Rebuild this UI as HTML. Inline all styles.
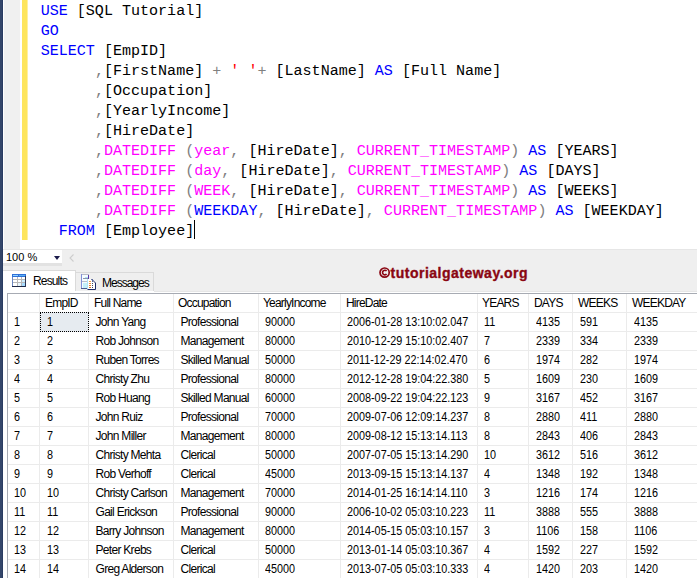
<!DOCTYPE html>
<html><head><meta charset="utf-8">
<style>
html,body{margin:0;padding:0;}
body{width:697px;height:578px;overflow:hidden;position:relative;background:#fff;}
.a{position:absolute;}
#code{position:absolute;left:40.7px;top:1px;font-family:"Liberation Mono",monospace;font-size:15.05px;line-height:20px;white-space:pre;color:#000;}
.k{color:#0000ff}.f{color:#ff00ff}.g{color:#808080}.s{color:#ff0000}
.t{position:absolute;font-family:"Liberation Sans",sans-serif;font-size:12px;line-height:19px;white-space:pre;color:#000;}
.al{letter-spacing:-0.7px}.ah{letter-spacing:-0.8px}.n{display:inline-block;transform:scaleX(0.9);transform-origin:0 0}
.h{}
.vl{position:absolute;width:1px;background:#ebebeb;}
.hl{position:absolute;height:1px;background:#ebebeb;}
</style></head><body>
<div class="a" style="left:0;top:0;width:2px;height:578px;background:#34466a"></div>
<div class="a" style="left:2px;top:0;width:1px;height:578px;background:#2a3c62"></div>
<div class="a" style="left:4px;top:0;width:16px;height:249px;background:#f0f0f0"></div>
<div class="a" style="left:22px;top:0;width:5px;height:240px;background:#fee55c"></div><div class="a" style="left:27px;top:0;width:1px;height:240px;background:#fef0a0"></div>
<div id="code"><span class="k">USE</span> [SQL Tutorial]
<span class="k">GO</span>
<span class="k">SELECT</span> [EmpID]
      <span class="g">,</span>[FirstName] <span class="g">+</span> <span class="s">' '</span><span class="g">+</span> [LastName] <span class="k">AS</span> [Full Name]
      <span class="g">,</span>[Occupation]
      <span class="g">,</span>[YearlyIncome]
      <span class="g">,</span>[HireDate]
      <span class="g">,</span><span class="f">DATEDIFF</span> <span class="g">(</span><span class="f">year</span><span class="g">,</span> [HireDate]<span class="g">,</span> <span class="f">CURRENT_TIMESTAMP</span><span class="g">)</span> <span class="k">AS</span> [YEARS]
      <span class="g">,</span><span class="f">DATEDIFF</span> <span class="g">(</span><span class="f">day</span><span class="g">,</span> [HireDate]<span class="g">,</span> <span class="f">CURRENT_TIMESTAMP</span><span class="g">)</span> <span class="k">AS</span> [DAYS]
      <span class="g">,</span><span class="f">DATEDIFF</span> <span class="g">(</span><span class="f">WEEK</span><span class="g">,</span> [HireDate]<span class="g">,</span> <span class="f">CURRENT_TIMESTAMP</span><span class="g">)</span> <span class="k">AS</span> [WEEKS]
      <span class="g">,</span><span class="f">DATEDIFF</span> <span class="g">(</span><span class="k">WEEKDAY</span><span class="g">,</span> [HireDate]<span class="g">,</span> <span class="f">CURRENT_TIMESTAMP</span><span class="g">)</span> <span class="k">AS</span> [WEEKDAY]
  <span class="k">FROM</span> [Employee]</div>
<div class="a" style="left:194px;top:220px;width:1px;height:19px;background:#000"></div>
<div class="a" style="left:3px;top:249px;width:694px;height:42px;background:#efefef"></div>
<div class="a" style="left:3px;top:249px;width:694px;height:1px;background:#e6e6e6"></div>
<div class="a" style="left:3px;top:250px;width:59px;height:13px;background:#fff"></div>
<div class="a" style="left:3px;top:263px;width:59px;height:3px;background:#e2e2e2"></div>
<div class="t" style="left:6px;top:248px;font-size:11px;letter-spacing:0px">100 %</div>
<svg class="a" style="left:54px;top:256px" width="6" height="4"><path d="M0 0H6L3 4Z" fill="#1b1b4a"/></svg>
<svg class="a" style="left:68px;top:253px" width="8" height="10"><path d="M5.5 1.5L2 5L5.5 8.5" stroke="#cdcdcd" stroke-width="1.1" fill="none"/></svg>
<div class="a" style="left:3px;top:270px;width:73px;height:21px;background:#fff;box-sizing:border-box;border-top:1px solid #dadada;border-right:1px solid #dadada"></div>
<div class="a" style="left:76px;top:272px;width:78px;height:19px;background:#efefef;box-sizing:border-box;border-top:1px solid #dadada;border-right:1px solid #dadada"></div>
<div class="a" style="left:154px;top:291px;width:543px;height:1px;background:#e6e6e6"></div>
<svg class="a" style="left:12px;top:274px" width="14" height="13">
<rect x="0" y="0" width="14" height="13" fill="#6a86c0"/>
<rect x="1" y="1" width="12" height="11" fill="#fff"/>
<rect x="0" y="0" width="14" height="3" fill="#2f6fd8"/>
<rect x="1" y="1" width="5" height="1" fill="#90d4ff"/>
<rect x="7" y="1" width="6" height="1" fill="#5ab0f0"/>
<rect x="5" y="3" width="1" height="9" fill="#b8b8b8"/>
<rect x="9" y="3" width="1" height="9" fill="#b8b8b8"/>
<rect x="1" y="5" width="12" height="1" fill="#b8b8b8"/>
<rect x="1" y="8" width="12" height="1" fill="#b8b8b8"/>
<rect x="10" y="6" width="3" height="2" fill="#cdeeff"/>
<rect x="10" y="9" width="3" height="3" fill="#a8dcff"/>
<rect x="6" y="9" width="3" height="3" fill="#e8f6ff"/>
<rect x="0" y="12" width="14" height="1" fill="#1e2846"/>
<rect x="13" y="2" width="1" height="11" fill="#2a3553"/>
</svg>
<svg class="a" style="left:81px;top:274px" width="15" height="16">
<rect x="0" y="0" width="8" height="15" fill="#8090d8"/>
<rect x="1" y="1" width="6" height="13" fill="#f6fcff"/>
<rect x="1" y="0" width="7" height="1" fill="#b8bcc8"/>
<rect x="7" y="1" width="1" height="5" fill="#5a38a8"/>
<rect x="2" y="4" width="5" height="1" fill="#8c94ac"/>
<rect x="4" y="3" width="3" height="1" fill="#a8e4f4"/>
<rect x="1" y="7" width="6" height="1" fill="#b8bcc8"/>
<rect x="2" y="9" width="5" height="5" fill="#c4f0fa"/>
<rect x="0" y="14" width="7" height="1" fill="#4a5a90"/>
<path d="M6 5H11L14 8V15H6Z" fill="#ffffff"/>
<rect x="6" y="5" width="1" height="10" fill="#b0e4f4"/>
<path d="M10.5 5.5H11L14.5 9V15.5H6.5" stroke="#1e2a66" stroke-width="1" fill="none"/>
<rect x="11" y="5" width="1" height="3" fill="#5a6a9a"/>
<rect x="8" y="7" width="2" height="1" fill="#f5a040"/>
<rect x="8" y="9" width="2" height="1" fill="#f09030"/>
<rect x="8" y="11" width="2" height="1" fill="#e88028"/>
<rect x="8" y="13" width="2" height="1" fill="#e07020"/>
<rect x="11" y="9" width="1" height="1" fill="#404860"/>
<rect x="11" y="11" width="1" height="1" fill="#404860"/>
<rect x="11" y="13" width="1" height="1" fill="#404860"/>
</svg>
<div class="t" style="left:33px;top:272px;letter-spacing:-0.85px">Results</div>
<div class="t" style="left:102px;top:274px;letter-spacing:-1px">Messages</div>
<svg class="a" style="left:379px;top:267px" width="12" height="12"><circle cx="5.6" cy="5.6" r="4.6" stroke="#8a0612" stroke-width="1.7" fill="none"/><path d="M7.6 4.1A2.3 2.3 0 1 0 7.6 7.1" stroke="#8a0612" stroke-width="1.6" fill="none"/></svg>
<div class="a" style="left:390.5px;top:263px;font-family:'Liberation Sans',sans-serif;font-weight:bold;font-size:14px;line-height:20px;letter-spacing:0.5px;color:#8a0612;-webkit-text-stroke:0.35px #8a0612;white-space:pre">tutorialgateway.org</div>
<div class="a" style="left:7px;top:293px;width:690px;height:1px;background:#a7abb3"></div>
<div class="a" style="left:7px;top:293px;width:1px;height:285px;background:#a7abb3"></div>

<div class="vl" style="left:39px;top:294px;height:284px"></div>
<div class="vl" style="left:88px;top:294px;height:284px"></div>
<div class="vl" style="left:173px;top:294px;height:284px"></div>
<div class="vl" style="left:258px;top:294px;height:284px"></div>
<div class="vl" style="left:340px;top:294px;height:284px"></div>
<div class="vl" style="left:477px;top:294px;height:284px"></div>
<div class="vl" style="left:528px;top:294px;height:284px"></div>
<div class="vl" style="left:572px;top:294px;height:284px"></div>
<div class="vl" style="left:626px;top:294px;height:284px"></div>
<div class="hl" style="left:8px;top:312px;width:689px"></div>
<div class="hl" style="left:8px;top:331px;width:689px"></div>
<div class="hl" style="left:8px;top:350px;width:689px"></div>
<div class="hl" style="left:8px;top:369px;width:689px"></div>
<div class="hl" style="left:8px;top:388px;width:689px"></div>
<div class="hl" style="left:8px;top:407px;width:689px"></div>
<div class="hl" style="left:8px;top:426px;width:689px"></div>
<div class="hl" style="left:8px;top:445px;width:689px"></div>
<div class="hl" style="left:8px;top:464px;width:689px"></div>
<div class="hl" style="left:8px;top:483px;width:689px"></div>
<div class="hl" style="left:8px;top:502px;width:689px"></div>
<div class="hl" style="left:8px;top:521px;width:689px"></div>
<div class="hl" style="left:8px;top:540px;width:689px"></div>
<div class="hl" style="left:8px;top:559px;width:689px"></div>
<div class="a" style="left:40px;top:312px;width:49px;height:20px;box-sizing:border-box;border:1px dotted #000;background:#e6ebf0"></div>
<div class="t ah" style="left:45px;top:294px">EmpID</div>
<div class="t ah" style="left:94px;top:294px">Full Name</div>
<div class="t ah" style="left:178px;top:294px">Occupation</div>
<div class="t ah" style="left:263px;top:294px">YearlyIncome</div>
<div class="t ah" style="left:346px;top:294px">HireDate</div>
<div class="t ah" style="left:482px;top:294px">YEARS</div>
<div class="t ah" style="left:534px;top:294px">DAYS</div>
<div class="t ah" style="left:578px;top:294px">WEEKS</div>
<div class="t ah" style="left:632px;top:294px">WEEKDAY</div>
<div class="t" style="left:14px;top:313px"><span class="n">1</span></div>
<div class="t" style="left:47px;top:313px"><span class="n">1</span></div>
<div class="t al" style="left:95.5px;top:313px">John Yang</div>
<div class="t al" style="left:180.5px;top:313px">Professional</div>
<div class="t" style="left:265px;top:313px"><span class="n">90000</span></div>
<div class="t" style="left:347px;top:313px"><span class="n">2006-01-28 13:10:02.047</span></div>
<div class="t" style="left:484px;top:313px"><span class="n">11</span></div>
<div class="t" style="left:536px;top:313px"><span class="n">4135</span></div>
<div class="t" style="left:580px;top:313px"><span class="n">591</span></div>
<div class="t" style="left:634px;top:313px"><span class="n">4135</span></div>
<div class="t" style="left:14px;top:332px"><span class="n">2</span></div>
<div class="t" style="left:47px;top:332px"><span class="n">2</span></div>
<div class="t al" style="left:95.5px;top:332px">Rob Johnson</div>
<div class="t al" style="left:180.5px;top:332px">Management</div>
<div class="t" style="left:265px;top:332px"><span class="n">80000</span></div>
<div class="t" style="left:347px;top:332px"><span class="n">2010-12-29 15:10:02.407</span></div>
<div class="t" style="left:484px;top:332px"><span class="n">7</span></div>
<div class="t" style="left:536px;top:332px"><span class="n">2339</span></div>
<div class="t" style="left:580px;top:332px"><span class="n">334</span></div>
<div class="t" style="left:634px;top:332px"><span class="n">2339</span></div>
<div class="t" style="left:14px;top:351px"><span class="n">3</span></div>
<div class="t" style="left:47px;top:351px"><span class="n">3</span></div>
<div class="t al" style="left:95.5px;top:351px">Ruben Torres</div>
<div class="t al" style="left:180.5px;top:351px">Skilled Manual</div>
<div class="t" style="left:265px;top:351px"><span class="n">50000</span></div>
<div class="t" style="left:347px;top:351px"><span class="n">2011-12-29 22:14:02.470</span></div>
<div class="t" style="left:484px;top:351px"><span class="n">6</span></div>
<div class="t" style="left:536px;top:351px"><span class="n">1974</span></div>
<div class="t" style="left:580px;top:351px"><span class="n">282</span></div>
<div class="t" style="left:634px;top:351px"><span class="n">1974</span></div>
<div class="t" style="left:14px;top:370px"><span class="n">4</span></div>
<div class="t" style="left:47px;top:370px"><span class="n">4</span></div>
<div class="t al" style="left:95.5px;top:370px">Christy Zhu</div>
<div class="t al" style="left:180.5px;top:370px">Professional</div>
<div class="t" style="left:265px;top:370px"><span class="n">80000</span></div>
<div class="t" style="left:347px;top:370px"><span class="n">2012-12-28 19:04:22.380</span></div>
<div class="t" style="left:484px;top:370px"><span class="n">5</span></div>
<div class="t" style="left:536px;top:370px"><span class="n">1609</span></div>
<div class="t" style="left:580px;top:370px"><span class="n">230</span></div>
<div class="t" style="left:634px;top:370px"><span class="n">1609</span></div>
<div class="t" style="left:14px;top:389px"><span class="n">5</span></div>
<div class="t" style="left:47px;top:389px"><span class="n">5</span></div>
<div class="t al" style="left:95.5px;top:389px">Rob Huang</div>
<div class="t al" style="left:180.5px;top:389px">Skilled Manual</div>
<div class="t" style="left:265px;top:389px"><span class="n">60000</span></div>
<div class="t" style="left:347px;top:389px"><span class="n">2008-09-22 19:04:22.123</span></div>
<div class="t" style="left:484px;top:389px"><span class="n">9</span></div>
<div class="t" style="left:536px;top:389px"><span class="n">3167</span></div>
<div class="t" style="left:580px;top:389px"><span class="n">452</span></div>
<div class="t" style="left:634px;top:389px"><span class="n">3167</span></div>
<div class="t" style="left:14px;top:408px"><span class="n">6</span></div>
<div class="t" style="left:47px;top:408px"><span class="n">6</span></div>
<div class="t al" style="left:95.5px;top:408px">John Ruiz</div>
<div class="t al" style="left:180.5px;top:408px">Professional</div>
<div class="t" style="left:265px;top:408px"><span class="n">70000</span></div>
<div class="t" style="left:347px;top:408px"><span class="n">2009-07-06 12:09:14.237</span></div>
<div class="t" style="left:484px;top:408px"><span class="n">8</span></div>
<div class="t" style="left:536px;top:408px"><span class="n">2880</span></div>
<div class="t" style="left:580px;top:408px"><span class="n">411</span></div>
<div class="t" style="left:634px;top:408px"><span class="n">2880</span></div>
<div class="t" style="left:14px;top:427px"><span class="n">7</span></div>
<div class="t" style="left:47px;top:427px"><span class="n">7</span></div>
<div class="t al" style="left:95.5px;top:427px">John Miller</div>
<div class="t al" style="left:180.5px;top:427px">Management</div>
<div class="t" style="left:265px;top:427px"><span class="n">80000</span></div>
<div class="t" style="left:347px;top:427px"><span class="n">2009-08-12 15:13:14.113</span></div>
<div class="t" style="left:484px;top:427px"><span class="n">8</span></div>
<div class="t" style="left:536px;top:427px"><span class="n">2843</span></div>
<div class="t" style="left:580px;top:427px"><span class="n">406</span></div>
<div class="t" style="left:634px;top:427px"><span class="n">2843</span></div>
<div class="t" style="left:14px;top:446px"><span class="n">8</span></div>
<div class="t" style="left:47px;top:446px"><span class="n">8</span></div>
<div class="t al" style="left:95.5px;top:446px">Christy Mehta</div>
<div class="t al" style="left:180.5px;top:446px">Clerical</div>
<div class="t" style="left:265px;top:446px"><span class="n">50000</span></div>
<div class="t" style="left:347px;top:446px"><span class="n">2007-07-05 15:13:14.290</span></div>
<div class="t" style="left:484px;top:446px"><span class="n">10</span></div>
<div class="t" style="left:536px;top:446px"><span class="n">3612</span></div>
<div class="t" style="left:580px;top:446px"><span class="n">516</span></div>
<div class="t" style="left:634px;top:446px"><span class="n">3612</span></div>
<div class="t" style="left:14px;top:465px"><span class="n">9</span></div>
<div class="t" style="left:47px;top:465px"><span class="n">9</span></div>
<div class="t al" style="left:95.5px;top:465px">Rob Verhoff</div>
<div class="t al" style="left:180.5px;top:465px">Clerical</div>
<div class="t" style="left:265px;top:465px"><span class="n">45000</span></div>
<div class="t" style="left:347px;top:465px"><span class="n">2013-09-15 15:13:14.137</span></div>
<div class="t" style="left:484px;top:465px"><span class="n">4</span></div>
<div class="t" style="left:536px;top:465px"><span class="n">1348</span></div>
<div class="t" style="left:580px;top:465px"><span class="n">192</span></div>
<div class="t" style="left:634px;top:465px"><span class="n">1348</span></div>
<div class="t" style="left:14px;top:484px"><span class="n">10</span></div>
<div class="t" style="left:47px;top:484px"><span class="n">10</span></div>
<div class="t al" style="left:95.5px;top:484px">Christy Carlson</div>
<div class="t al" style="left:180.5px;top:484px">Management</div>
<div class="t" style="left:265px;top:484px"><span class="n">70000</span></div>
<div class="t" style="left:347px;top:484px"><span class="n">2014-01-25 16:14:14.110</span></div>
<div class="t" style="left:484px;top:484px"><span class="n">3</span></div>
<div class="t" style="left:536px;top:484px"><span class="n">1216</span></div>
<div class="t" style="left:580px;top:484px"><span class="n">174</span></div>
<div class="t" style="left:634px;top:484px"><span class="n">1216</span></div>
<div class="t" style="left:14px;top:503px"><span class="n">11</span></div>
<div class="t" style="left:47px;top:503px"><span class="n">11</span></div>
<div class="t al" style="left:95.5px;top:503px">Gail Erickson</div>
<div class="t al" style="left:180.5px;top:503px">Professional</div>
<div class="t" style="left:265px;top:503px"><span class="n">90000</span></div>
<div class="t" style="left:347px;top:503px"><span class="n">2006-10-02 05:03:10.223</span></div>
<div class="t" style="left:484px;top:503px"><span class="n">11</span></div>
<div class="t" style="left:536px;top:503px"><span class="n">3888</span></div>
<div class="t" style="left:580px;top:503px"><span class="n">555</span></div>
<div class="t" style="left:634px;top:503px"><span class="n">3888</span></div>
<div class="t" style="left:14px;top:522px"><span class="n">12</span></div>
<div class="t" style="left:47px;top:522px"><span class="n">12</span></div>
<div class="t al" style="left:95.5px;top:522px">Barry Johnson</div>
<div class="t al" style="left:180.5px;top:522px">Management</div>
<div class="t" style="left:265px;top:522px"><span class="n">80000</span></div>
<div class="t" style="left:347px;top:522px"><span class="n">2014-05-15 05:03:10.157</span></div>
<div class="t" style="left:484px;top:522px"><span class="n">3</span></div>
<div class="t" style="left:536px;top:522px"><span class="n">1106</span></div>
<div class="t" style="left:580px;top:522px"><span class="n">158</span></div>
<div class="t" style="left:634px;top:522px"><span class="n">1106</span></div>
<div class="t" style="left:14px;top:541px"><span class="n">13</span></div>
<div class="t" style="left:47px;top:541px"><span class="n">13</span></div>
<div class="t al" style="left:95.5px;top:541px">Peter Krebs</div>
<div class="t al" style="left:180.5px;top:541px">Clerical</div>
<div class="t" style="left:265px;top:541px"><span class="n">50000</span></div>
<div class="t" style="left:347px;top:541px"><span class="n">2013-01-14 05:03:10.367</span></div>
<div class="t" style="left:484px;top:541px"><span class="n">4</span></div>
<div class="t" style="left:536px;top:541px"><span class="n">1592</span></div>
<div class="t" style="left:580px;top:541px"><span class="n">227</span></div>
<div class="t" style="left:634px;top:541px"><span class="n">1592</span></div>
<div class="t" style="left:14px;top:560px"><span class="n">14</span></div>
<div class="t" style="left:47px;top:560px"><span class="n">14</span></div>
<div class="t al" style="left:95.5px;top:560px">Greg Alderson</div>
<div class="t al" style="left:180.5px;top:560px">Clerical</div>
<div class="t" style="left:265px;top:560px"><span class="n">45000</span></div>
<div class="t" style="left:347px;top:560px"><span class="n">2013-07-05 05:03:10.333</span></div>
<div class="t" style="left:484px;top:560px"><span class="n">4</span></div>
<div class="t" style="left:536px;top:560px"><span class="n">1420</span></div>
<div class="t" style="left:580px;top:560px"><span class="n">203</span></div>
<div class="t" style="left:634px;top:560px"><span class="n">1420</span></div>
</body></html>
